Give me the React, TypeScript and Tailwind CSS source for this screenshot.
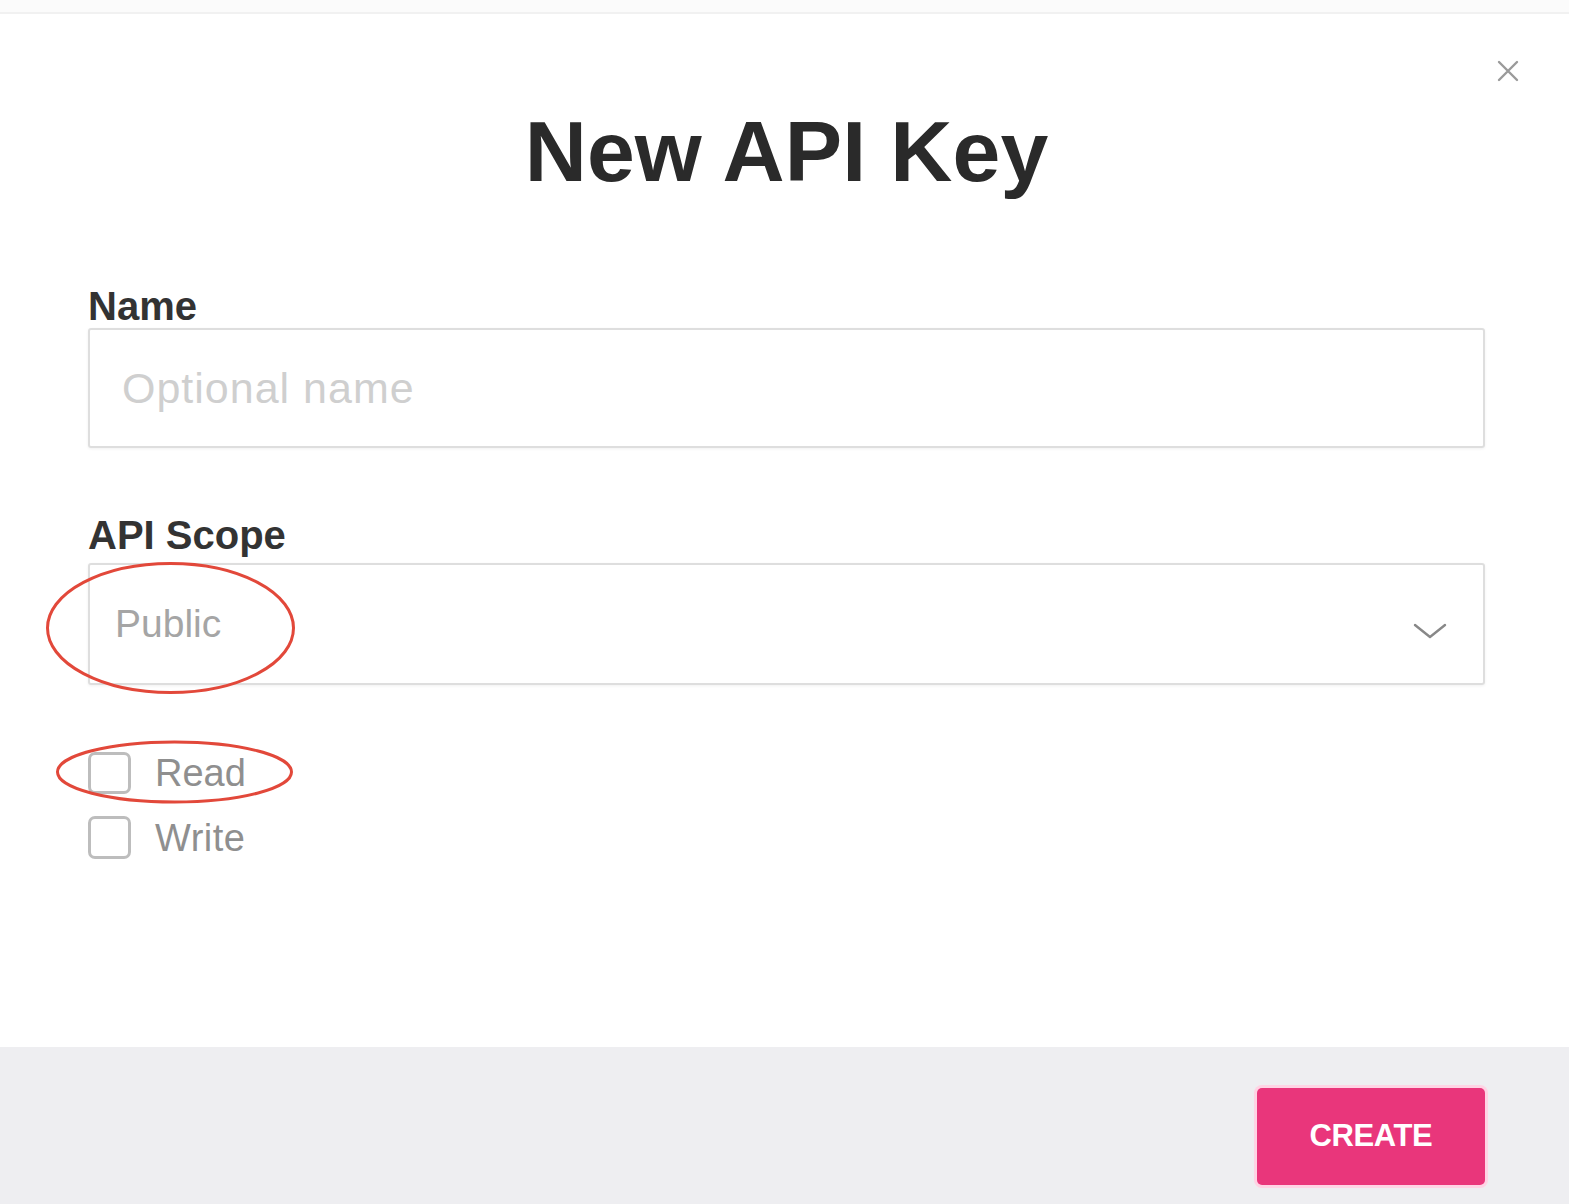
import React from "react";

export default function App() {
  return (
    <div
      className="relative w-[1569px] h-[1204px] bg-white flex flex-col overflow-hidden"
      style={{ fontFamily: '"Liberation Sans", Arial, sans-serif' }}
    >
      <div className="h-[14px] shrink-0 bg-[#fbfbfb] border-b-2 border-[#f1f1f1]" />

      <button className="absolute top-[58px] left-[1495px] w-[26px] h-[26px] flex items-center justify-center">
        <svg width="24" height="24" viewBox="0 0 24 24" fill="none" stroke="#9a9a9a" strokeWidth="2.4" strokeLinecap="round">
          <path d="M3 3 L21 21 M21 3 L3 21" />
        </svg>
      </button>

      <div className="flex-1 flex flex-col pl-[88px] pr-[84px]">
        <h1 className="mt-[94px] text-center text-[86px] leading-none font-bold text-[#2a2a2a] tracking-[0.1px]">
          New API Key
        </h1>

        <label className="mt-[92px] text-[40px] leading-none font-bold text-[#333]">Name</label>
        <div className="mt-[2px] h-[120px] border-2 border-[#dedede] rounded-[3px] shadow-[0_1px_3px_rgba(0,0,0,0.06)] flex items-center pl-[32px]">
          <span className="text-[43px] text-[#cfcfcf] tracking-[1px]">Optional name</span>
        </div>

        <label className="mt-[67px] text-[40px] leading-none font-bold text-[#333]">API Scope</label>
        <div className="mt-[8px] h-[122px] border-2 border-[#dedede] rounded-[3px] shadow-[0_1px_3px_rgba(0,0,0,0.06)] flex items-center justify-between pl-[25px] pr-[34px]">
          <span className="text-[39px] text-[#a5a5a5]">Public</span>
          <svg width="38" height="20" viewBox="0 0 38 20" fill="none" stroke="#888" strokeWidth="2.4" strokeLinecap="round" strokeLinejoin="round" className="mt-[14px]">
            <path d="M4 4 L19 16 L34 4" />
          </svg>
        </div>

        <div className="mt-[67px] flex flex-col gap-[22px]">
          <div className="flex items-center gap-[24px]">
            <div className="w-[43px] h-[42px] border-[3px] border-[#bdbdbd] rounded-[7px]" />
            <span className="text-[38px] leading-none text-[#8f8f8f]">Read</span>
          </div>
          <div className="flex items-center gap-[24px]">
            <div className="w-[43px] h-[43px] border-[3px] border-[#bdbdbd] rounded-[7px]" />
            <span className="text-[38px] leading-none text-[#8f8f8f] tracking-[0.5px]">Write</span>
          </div>
        </div>
      </div>

      <div className="h-[157px] shrink-0 bg-[#eeeef1] flex justify-end items-start pt-[41px] pr-[84px]">
        <button className="w-[228px] h-[97px] bg-[#e9367b] rounded-[5px] shadow-[0_0_0_3px_#ffd3e4] flex items-center justify-center">
          <span className="text-[31px] font-bold text-white tracking-[-0.4px]">CREATE</span>
        </button>
      </div>

      <svg className="absolute left-0 top-0 pointer-events-none" width="1569" height="1204" viewBox="0 0 1569 1204" fill="none">
        <ellipse cx="170.5" cy="628" rx="123" ry="64.5" stroke="#e2483a" strokeWidth="3" />
        <ellipse cx="174.5" cy="772" rx="117" ry="30" stroke="#e2483a" strokeWidth="3" />
      </svg>
    </div>
  );
}
